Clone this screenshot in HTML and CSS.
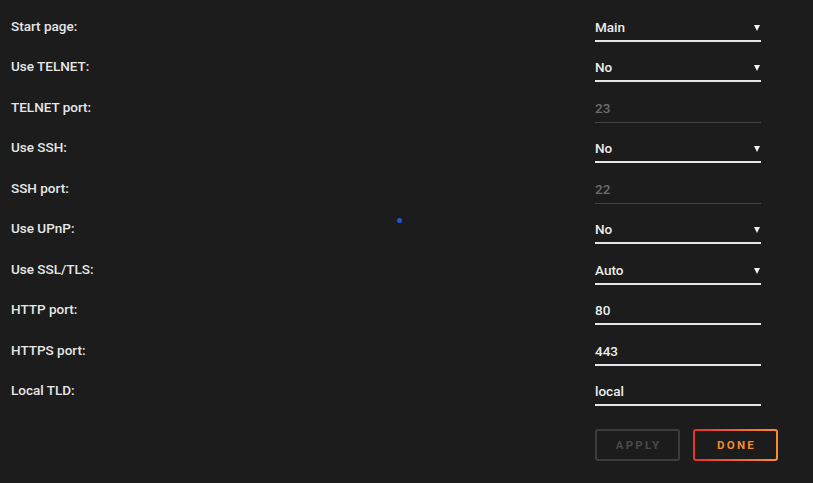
FILE: index.html
```html
<!DOCTYPE html>
<html>
<head>
  <title>Settings</title>
  <link rel="stylesheet" href="styles.css">
</head>
<body>

  <div class="settings">
    <div class="row">
      <label>Start page:</label>
      <div class="field select">Main<span class="arrow"></span></div>
    </div>
    <div class="row">
      <label>Use TELNET:</label>
      <div class="field select">No<span class="arrow"></span></div>
    </div>
    <div class="row">
      <label>TELNET port:</label>
      <div class="field disabled">23</div>
    </div>
    <div class="row">
      <label>Use SSH:</label>
      <div class="field select">No<span class="arrow"></span></div>
    </div>
    <div class="row">
      <label>SSH port:</label>
      <div class="field disabled">22</div>
    </div>
    <div class="row">
      <label>Use UPnP:</label>
      <div class="field select">No<span class="arrow"></span></div>
    </div>
    <div class="row">
      <label>Use SSL/TLS:</label>
      <div class="field select">Auto<span class="arrow"></span></div>
    </div>
    <div class="row">
      <label>HTTP port:</label>
      <div class="field">80</div>
    </div>
    <div class="row">
      <label>HTTPS port:</label>
      <div class="field">443</div>
    </div>
    <div class="row">
      <label>Local TLD:</label>
      <div class="field">local</div>
    </div>

    <div class="buttons">
      <button class="btn apply">APPLY</button>
      <button class="btn done">DONE</button>
    </div>
  </div>

  <div class="dot"></div>

</body>
</html>
```

FILE: styles.css
```css
body {
  margin: 0;
  background: #1c1c1c;
  font-family: Roboto, "Noto Sans", sans-serif;
  font-weight: 500;
  font-size: 13px;
  color: #e6e6e6;
  width: 813px;
  height: 483px;
  overflow: hidden;
}
.settings {
  padding: 1px 0 0 11px;
}
.row {
  display: flex;
  align-items: flex-end;
  height: 40.5px;
}
.row label {
  flex: 1;
  padding-bottom: 8px;
  font-size: 13.5px;
}
.field {
  position: relative;
  width: 166px;
  margin-right: 52px;
  height: 26px;
  line-height: 22px;
  box-sizing: border-box;
  border-bottom: 2px solid #e6e6e6;
  font-size: 13.5px;
  color: #ececec;
}
.field.disabled {
  color: #6c6c6c;
  border-bottom: 1px solid #444;
}
.arrow {
  position: absolute;
  right: 1px;
  top: 9px;
  width: 0;
  height: 0;
  border-left: 3px solid transparent;
  border-right: 3px solid transparent;
  border-top: 6px solid #f0f0f0;
}
.buttons {
  display: flex;
  gap: 13px;
  margin: 23px 0 0 584px;
}
.btn {
  width: 85px;
  height: 32px;
  background: #1c1c1c;
  font-family: Roboto, "Noto Sans", sans-serif;
  font-weight: 700;
  font-size: 11.5px;
  letter-spacing: 2.2px;
  border-radius: 3px;
  padding: 0 0 0 2px;
}
.apply {
  border: 2px solid #3c3c3c;
  color: #4a4a4a;
}
.done {
  border: 2px solid transparent;
  color: #f28a30;
  background: linear-gradient(#1c1c1c, #1c1c1c) padding-box,
              linear-gradient(90deg, #e8302a, #f8902e) border-box;
}
.dot {
  position: absolute;
  left: 397px;
  top: 218px;
  width: 5px;
  height: 5px;
  border-radius: 50%;
  background: #1f55e0;
}
```
